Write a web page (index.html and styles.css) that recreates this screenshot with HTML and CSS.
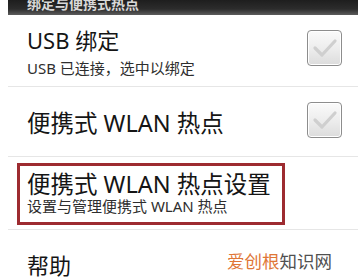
FILE: index.html
```html
<!DOCTYPE html>
<html lang="zh-CN">
<head>
<meta charset="utf-8">
<link rel="stylesheet" href="styles.css">
</head>
<body>
<div class="screen">
  <div class="header"><span class="header-text">绑定与便携式热点</span></div>
  <div class="row row-usb">
    <div class="texts">
      <div class="title t22">USB 绑定</div>
      <div class="sub">USB 已连接，选中以绑定</div>
    </div>
    <div class="check check-1">
      <svg viewBox="0 0 35 36" width="35" height="36"><path d="M8 18 L15 25 L28 11" fill="none" stroke="#cfcfcf" stroke-width="3.2" stroke-linecap="round" stroke-linejoin="round"/></svg>
    </div>
  </div>
  <div class="row row-wlan">
    <div class="texts">
      <div class="title t23">便携式 WLAN 热点</div>
    </div>
    <div class="check check-2">
      <svg viewBox="0 0 35 36" width="35" height="36"><path d="M8 18 L15 25 L28 11" fill="none" stroke="#cfcfcf" stroke-width="3.2" stroke-linecap="round" stroke-linejoin="round"/></svg>
    </div>
  </div>
  <div class="row row-set">
    <div class="redbox">
      <div class="title t23 tight">便携式 WLAN 热点设置</div>
      <div class="sub tight-sub">设置与管理便携式 WLAN 热点</div>
    </div>
  </div>
  <div class="row row-help">
    <div class="title t22">帮助</div>
    <div class="mark"><span class="orange">爱创根</span>知识网</div>
  </div>
</div>
</body>
</html>
```
FILE: styles.css
```css
html, body {
  margin: 0;
  padding: 0;
  background: #ffffff;
  overflow: hidden;
}
.screen {
  width: 358px;
  height: 279px;
  padding-left: 8px;
  box-sizing: border-box;
  font-family: "Noto Sans", "Noto Sans CJK SC", sans-serif;
  color: #151515;
  background: #fff;
  overflow: hidden;
}
.header {
  height: 15px;
  background: linear-gradient(to bottom, #1e1e1e 0%, #2c2c2c 60%, #5c5c5c 100%);
  overflow: hidden;
  padding-left: 19px;
}
.header-text {
  display: block;
  font-size: 14px;
  line-height: 14px;
  margin-top: -3px;
  color: #d8d8d8;
  font-weight: bold;
}
.row {
  display: flex;
  border-bottom: 1px solid #e6e6e6;
}
.row-usb {
  height: 71px;
  padding-left: 19px;
  box-sizing: content-box;
}
.row-usb .texts {
  padding-top: 11px;
  flex: 1;
}
.row-wlan {
  height: 69px;
  padding-left: 19px;
  align-items: center;
}
.row-wlan .texts {
  flex: 1;
  padding-top: 3px;
}
.row-set {
  height: 73px;
  padding-left: 9px;
  padding-top: 6px;
  box-sizing: border-box;
}
.row-help {
  height: 60px;
  padding-left: 19px;
  border-bottom: none;
  padding-top: 21px;
  box-sizing: border-box;
}
.title {
  color: #151515;
}
.t22 {
  font-size: 22px;
  line-height: 28px;
}
.t23 {
  font-size: 23.5px;
  line-height: 28px;
}
.tight {
  line-height: 24px;
}
.sub {
  font-size: 15px;
  line-height: 20px;
  margin-top: 4px;
  color: #2e2e2e;
}
.tight-sub {
  line-height: 18px;
  margin-top: 1px;
}
.check {
  width: 35px;
  height: 36px;
  box-sizing: border-box;
  border: 1px solid #8d8d8d;
  border-radius: 4px;
  background: linear-gradient(to bottom, #fafafa 0%, #ececec 55%, #dcdcdc 100%);
  box-shadow: inset 0 0 0 1px #ffffff;
  margin-right: 16px;
  display: flex;
}
.check svg {
  display: block;
  margin: -1px;
}
.check-1 {
  margin-top: 15px;
}
.check-2 {
  margin-top: -3px;
}
.redbox {
  width: 268px;
  height: 62px;
  box-sizing: border-box;
  border: 3px solid #9d2b30;
  padding-left: 7px;
  padding-top: 6px;
}
.mark {
  margin-left: auto;
  margin-right: 26px;
  margin-top: -1px;
  font-size: 17.5px;
  line-height: 22px;
  color: #505050;
  font-family: "Noto Sans CJK SC", sans-serif;
}
.orange {
  color: #e07636;
}
```
